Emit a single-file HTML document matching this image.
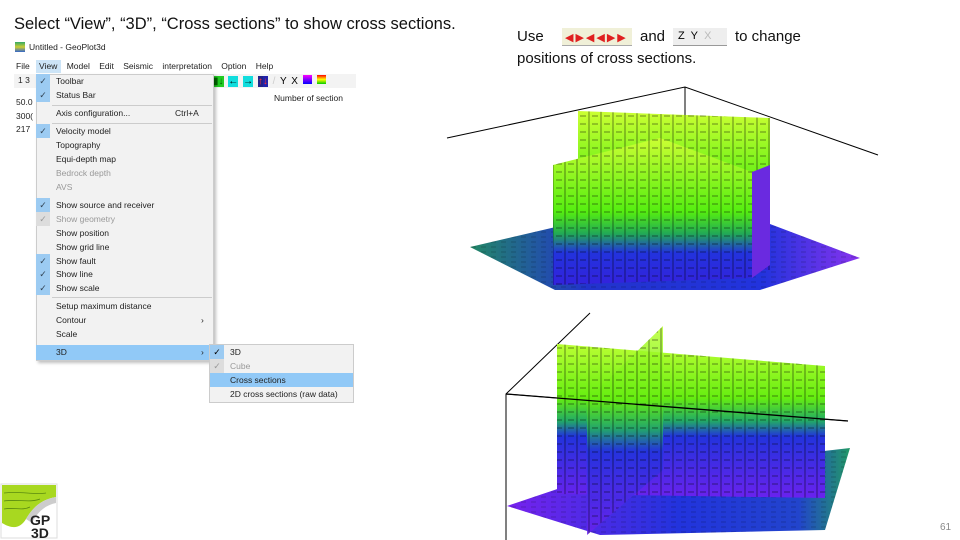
<!DOCTYPE html>
<html><head><meta charset="utf-8"><style>
*{margin:0;padding:0;box-sizing:border-box}
body{width:960px;height:540px;background:#fff;position:relative;overflow:hidden;font-family:"Liberation Sans",sans-serif}
.a{position:absolute;white-space:nowrap}
.t{font-family:"Liberation Sans",sans-serif;font-size:15px;color:#111}
.m{font-size:8.5px;color:#222}
.g{color:#999}
.ck{position:absolute;left:36px;width:14px;height:14px;background:#9ccbf2;color:#345;font-size:9px;text-align:center;line-height:14px}
</style></head><body>
<div class="a t" style="left:14px;top:15px;font-size:16.5px">Select “View”, “3D”, “Cross sections” to show cross sections.</div>
<div class="a t" style="left:517px;top:28px">Use</div>
<div class="a" style="left:562px;top:28px;width:70px;height:18px;background:#f0f0d8;border-bottom:1px solid #aaa"></div>
<div class="a" style="left:565px;top:31px;font-size:11px;color:#e02020;letter-spacing:2px">◀▶◀◀▶▶</div>
<div class="a t" style="left:640px;top:28px">and</div>
<div class="a" style="left:673px;top:28px;width:54px;height:18px;background:#eee;border-bottom:1px solid #999;font-size:11px;padding-left:5px;line-height:16px">Z&nbsp; Y&nbsp; <span style="color:#bbb">X</span></div>
<div class="a t" style="left:735px;top:28px">to change</div>
<div class="a t" style="left:517px;top:50px">positions of cross sections.</div>

<div class="a" style="left:15px;top:42px;width:10px;height:10px;background:linear-gradient(#3a6,#cc3 50%,#36c)"></div>
<div class="a m" style="left:29px;top:42px">Untitled - GeoPlot3d</div>
<div class="a" style="left:36px;top:60px;width:25px;height:13px;background:#cce4f7"></div>
<div class="a m" style="left:16px;top:61px;word-spacing:7px">File View Model Edit Seismic interpretation Option Help</div>
<div class="a" style="left:14px;top:74px;width:342px;height:14px;background:#f3f3f3"></div>
<div class="a m" style="left:18px;top:75px">1 3</div>
<div class="a" style="left:213px;top:75px;width:140px;height:12px;font-size:10px;line-height:12px;word-spacing:2px">
<span style="background:#2c2;color:#060">▮↓</span> <span style="background:#1dd;">←</span> <span style="background:#1dd">→</span> <span style="background:#228;color:#f33">↑</span><span style="background:#22a;color:#f33">↓</span> <span style="color:#ccc">/</span> Y X <span style="display:inline-block;width:9px;height:9px;background:linear-gradient(#f0f,#00f)"></span> <span style="display:inline-block;width:9px;height:9px;background:linear-gradient(#f00,#ff0,#0c0)"></span></div>
<div class="a m" style="left:274px;top:93px">Number of section</div>
<div class="a m" style="left:16px;top:96px;line-height:13.5px">50.0<br>300(<br>217</div>

<div class="a" style="left:36px;top:74px;width:178px;height:287px;background:#f2f2f2;border:1px solid #ccc;box-shadow:2px 2px 3px rgba(0,0,0,.25)"></div>
<div class="a" style="left:36px;top:345px;width:177px;height:15px;background:#91c9f7"></div>
<div class="a" style="left:52px;top:105px;width:160px;height:1px;background:#ccc"></div>
<div class="a" style="left:52px;top:123px;width:160px;height:1px;background:#ccc"></div>
<div class="a" style="left:52px;top:297px;width:160px;height:1px;background:#ccc"></div>
<div class="ck" style="top:74px">✓</div><div class="ck" style="top:88px">✓</div><div class="ck" style="top:124px">✓</div>
<div class="ck" style="top:198px">✓</div><div class="ck" style="top:212px;background:#ddd;color:#999">✓</div>
<div class="ck" style="top:254px">✓</div><div class="ck" style="top:267px">✓</div><div class="ck" style="top:281px">✓</div>
<div class="a m" style="left:56px;top:76px">Toolbar</div>
<div class="a m" style="left:56px;top:90px">Status Bar</div>
<div class="a m" style="left:56px;top:108px">Axis configuration...</div><div class="a m" style="left:175px;top:108px">Ctrl+A</div>
<div class="a m" style="left:56px;top:126px">Velocity model</div>
<div class="a m" style="left:56px;top:140px">Topography</div>
<div class="a m" style="left:56px;top:154px">Equi-depth map</div>
<div class="a m g" style="left:56px;top:168px">Bedrock depth</div>
<div class="a m g" style="left:56px;top:182px">AVS</div>
<div class="a m" style="left:56px;top:200px">Show source and receiver</div>
<div class="a m g" style="left:56px;top:214px">Show geometry</div>
<div class="a m" style="left:56px;top:228px">Show position</div>
<div class="a m" style="left:56px;top:242px">Show grid line</div>
<div class="a m" style="left:56px;top:256px">Show fault</div>
<div class="a m" style="left:56px;top:269px">Show line</div>
<div class="a m" style="left:56px;top:283px">Show scale</div>
<div class="a m" style="left:56px;top:301px">Setup maximum distance</div>
<div class="a m" style="left:56px;top:315px">Contour</div><div class="a m" style="left:201px;top:315px">›</div>
<div class="a m" style="left:56px;top:329px">Scale</div>
<div class="a m" style="left:56px;top:347px">3D</div><div class="a m" style="left:201px;top:347px">›</div>

<div class="a" style="left:209px;top:344px;width:145px;height:59px;background:#f2f2f2;border:1px solid #ccc"></div>
<div class="a" style="left:210px;top:373px;width:143px;height:14px;background:#91c9f7"></div>
<div class="a" style="left:210px;top:345px;width:14px;height:14px;background:#9ccbf2;font-size:9px;text-align:center;line-height:14px">✓</div>
<div class="a" style="left:210px;top:359px;width:14px;height:14px;background:#ddd;color:#999;font-size:9px;text-align:center;line-height:14px">✓</div>
<div class="a m" style="left:230px;top:347px">3D</div>
<div class="a m g" style="left:230px;top:361px">Cube</div>
<div class="a m" style="left:230px;top:375px">Cross sections</div>
<div class="a m" style="left:230px;top:389px">2D cross sections (raw data)</div>

<svg class="a" style="left:0;top:0" width="960" height="540">
<defs>
<linearGradient id="wg" x1="0" y1="0" x2="0" y2="1"><stop offset="0" stop-color="#ccff33"/><stop offset=".5" stop-color="#55ee10"/><stop offset=".65" stop-color="#22aa55"/><stop offset=".78" stop-color="#2233dd"/><stop offset="1" stop-color="#3322dd"/></linearGradient>
<linearGradient id="wg2" x1="0" y1="0" x2="0" y2="1"><stop offset="0" stop-color="#bbff33"/><stop offset=".35" stop-color="#66ee10"/><stop offset=".5" stop-color="#22aa66"/><stop offset=".6" stop-color="#2233dd"/><stop offset="1" stop-color="#6a22ee"/></linearGradient>
<linearGradient id="fl" x1="0" y1="0" x2="1" y2="0"><stop offset="0" stop-color="#228866"/><stop offset=".3" stop-color="#2233cc"/><stop offset=".75" stop-color="#2233dd"/><stop offset="1" stop-color="#8833ee"/></linearGradient>
<linearGradient id="fl2" x1="0" y1="0" x2="1" y2="0"><stop offset="0" stop-color="#7722ee"/><stop offset=".5" stop-color="#2233dd"/><stop offset=".85" stop-color="#2244cc"/><stop offset="1" stop-color="#229966"/></linearGradient>
<pattern id="h" width="12" height="8" patternUnits="userSpaceOnUse"><path d="M1 0V8M4 4H10" stroke="#000" stroke-width=".8" opacity=".6"/></pattern>
<pattern id="hf" width="10" height="5" patternUnits="userSpaceOnUse"><path d="M1 2H6" stroke="#000" stroke-width=".6" opacity=".35"/></pattern>
</defs>
<g stroke="#000" stroke-width="1" fill="none"><path d="M447 138L685 87L878 155M685 87V175"/></g>
<polygon points="470,247 560,226 770,224 860,258 760,290 555,290" fill="url(#fl)"/>
<polygon points="470,247 560,226 770,224 860,258 760,290 555,290" fill="url(#hf)"/>
<polygon points="578,111 770,118 770,270 578,270" fill="url(#wg)"/>
<polygon points="578,111 770,118 770,270 578,270" fill="url(#h)"/>
<polygon points="553,165 660,138 752,172 752,278 553,285" fill="url(#wg)"/>
<polygon points="553,165 660,138 752,172 752,278 553,285" fill="url(#h)"/>
<polygon points="752,172 770,165 770,265 752,278" fill="#6a2ae0"/>

<g stroke="#000" stroke-width="1" fill="none"><path d="M506 540V394L590 313M506 394L848 421"/></g>
<polygon points="507,506 590,478 850,448 825,530 600,535" fill="url(#fl2)"/>
<polygon points="507,506 590,478 850,448 825,530 600,535" fill="url(#hf)"/>
<polygon points="557,344 825,366 825,498 557,494" fill="url(#wg2)"/>
<polygon points="557,344 825,366 825,498 557,494" fill="url(#h)"/>
<polygon points="587,400 663,326 663,470 587,535" fill="url(#wg2)" opacity=".85"/>
<polygon points="587,400 663,326 663,470 587,535" fill="url(#h)"/>
<path d="M506 394L848 421" stroke="#000" stroke-width="1.3"/>

<g transform="translate(0,483)">
<rect x="1" y="1" width="56" height="54" fill="#fff" stroke="#ddd"/>
<path d="M2 2H56V14C44 16 34 22 26 36C20 46 12 46 2 40Z" fill="#a8d820"/>
<path d="M26 36C34 22 44 16 56 14V20C46 22 38 28 32 40Z" fill="#ccc"/>
<path d="M4 10C20 8 34 12 46 10M4 18C18 16 30 20 40 16M4 26C14 24 22 28 30 24" stroke="#5a8a10" stroke-width=".8" fill="none"/>
<text x="30" y="42" font-family="Liberation Sans" font-weight="bold" font-size="14" fill="#222">GP</text>
<text x="31" y="55" font-family="Liberation Sans" font-weight="bold" font-size="14" fill="#222">3D</text>
</g>
<text x="940" y="530" font-family="Liberation Sans" font-size="10" fill="#888">61</text>
</svg>
</body></html>
